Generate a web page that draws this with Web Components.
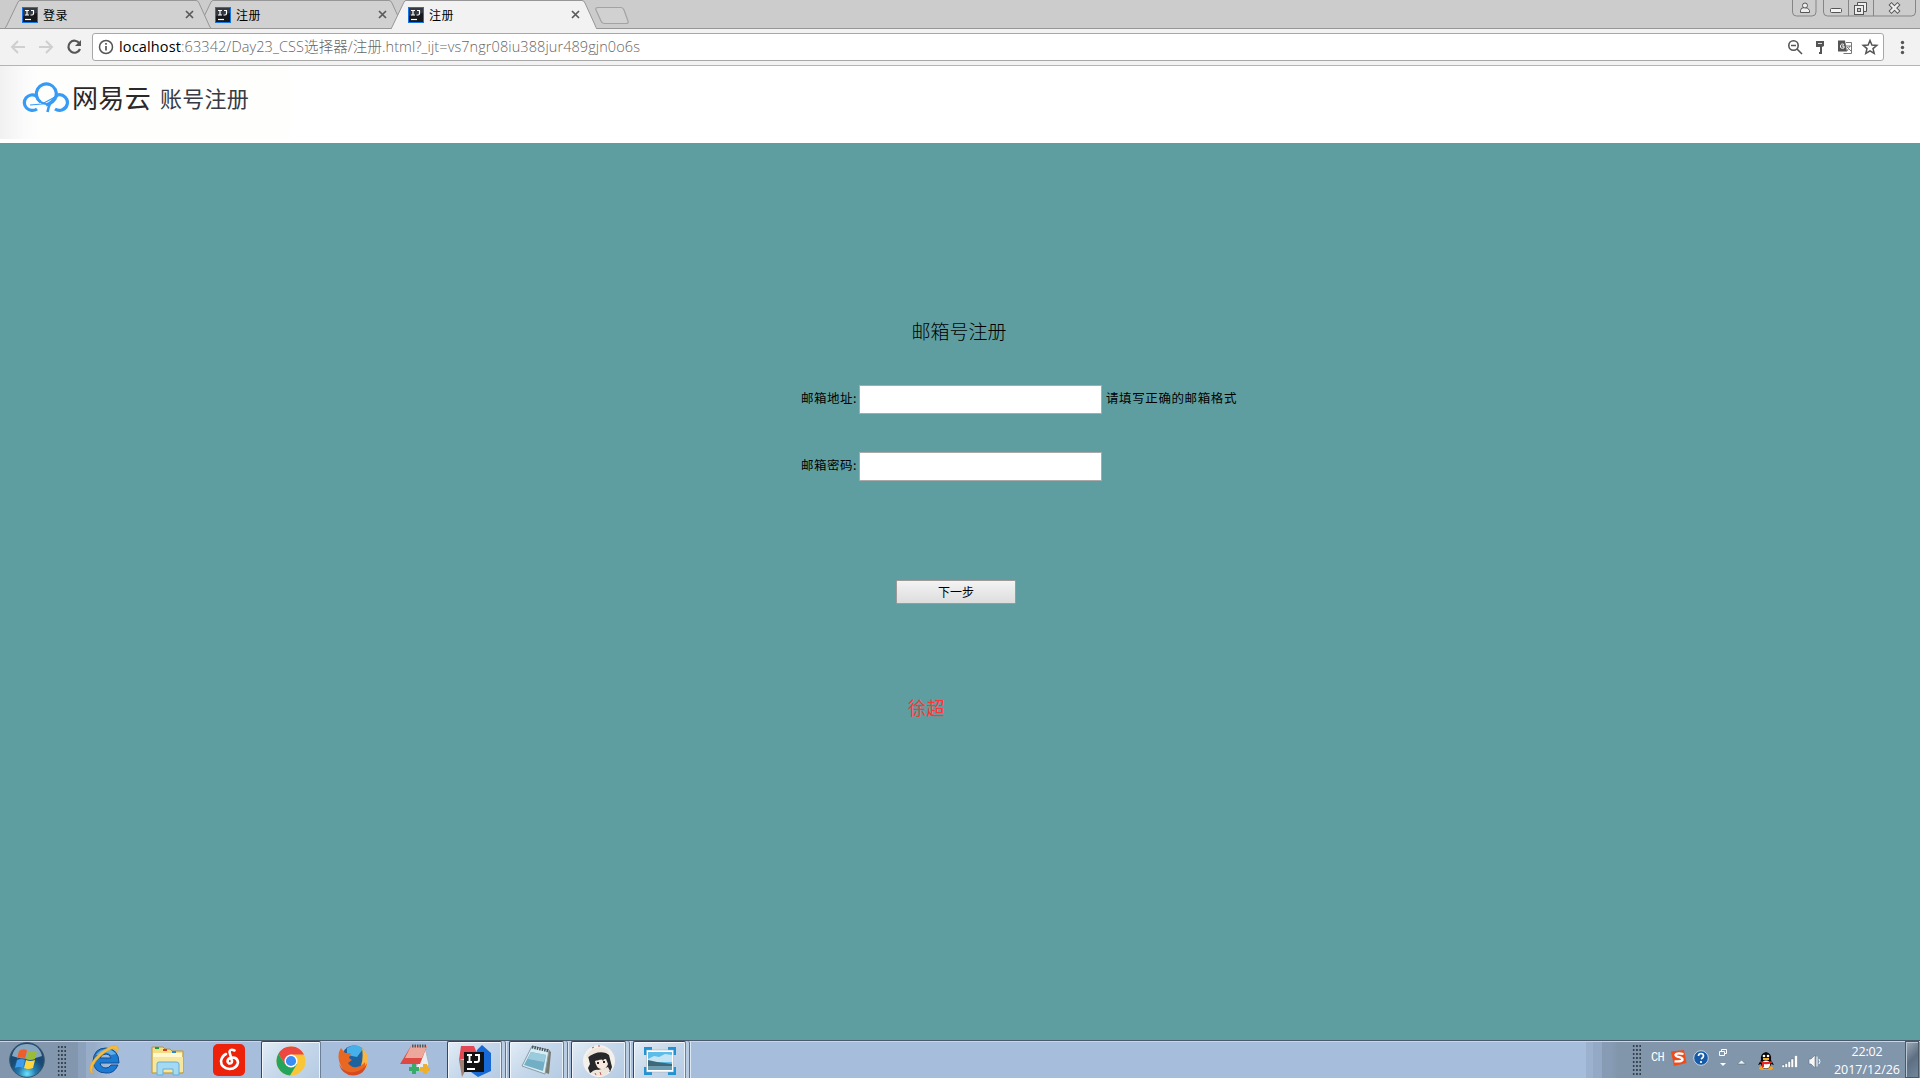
<!DOCTYPE html>
<html lang="zh-CN">
<head>
<meta charset="utf-8">
<title>注册</title>
<style>
html,body{margin:0;height:100%;overflow:hidden}
body{font-family:"Open Sans","Noto Sans CJK SC",sans-serif;color:#000}
</style>
</head>
<body>
<desktop-screen></desktop-screen>
<script>
const define=(name,css,html,after)=>customElements.define(name,class extends HTMLElement{
  connectedCallback(){
    if(this.shadowRoot)return;
    const r=this.attachShadow({mode:'open'});
    r.innerHTML='<style>*{box-sizing:border-box}:host{display:block;box-sizing:border-box}svg{display:block;flex:none}'+css+'</style>'+(typeof html==='function'?html(this):html);
    if(after)after(this,r);
  }
});

/* One line of text whose letter spacing is adjusted to fill a given width. */
define('fit-text',`:host{display:block;white-space:nowrap;flex:none}span{display:inline-block}`,
  el=>`<span>${el.getAttribute('text')}</span>`,
  (el,r)=>{
    const s=r.querySelector('span'),w=+el.getAttribute('w'),t=el.getAttribute('text');
    const fit=()=>{const n=s.getBoundingClientRect().width;if(n)s.style.letterSpacing=((w-n)/[...t].length)+'px'};
    fit();el.style.width=w+'px';
  });

const IJ=`<svg width="16" height="16" viewBox="0 0 16 16"><rect width="16" height="16" fill="#1673e6"/><rect x="1" y="1" width="14" height="14" fill="#17191d"/><path d="M1 1h14v5L1 9z" fill="#343840"/><path d="M3 3.500h4M5 3.500v4.500M3 8h4M9 3.500h3M11.500 3.500v3q0 1.500-1.500 1.500H8.500" stroke="#fff" stroke-width="1.200" fill="none"/><path d="M3 12.500h6" stroke="#fff" stroke-width="1.200"/></svg>`;

define('browser-tab',`:host{position:relative;width:206px;height:29px;flex:none;margin-right:-13px;z-index:2}
:host([mid]){z-index:1}:host([active]){z-index:3}
.shape{position:absolute;inset:0}.row{position:relative;display:flex;align-items:center;height:29px;padding:0 17px 0 17px;font-size:12px}
fit-text{margin-left:5px}`,
el=>{const a=el.hasAttribute('active');return `<svg class="shape" width="206" height="29"><path d="M0 ${a?29:28}L1.500 26L13 2Q14 .5 15 .5H191Q193 .5 194 3L204 25Q205 28 206 ${a?29:28}" fill="${a?'#f2f2f2':'#d1d1d1'}" stroke="#969696"/></svg>
<div class="row">${IJ}<fit-text text="${el.getAttribute('name')}" w="25"></fit-text><span style="flex:1"></span><svg width="9" height="9" viewBox="0 0 9 9"><path d="M1 1l7 7M8 1l-7 7" stroke="#5a5a5a" stroke-width="1.700"/></svg></div>`});

define('tab-strip',`:host{height:29px;display:flex;padding-left:5px;position:relative;background:linear-gradient(#ccc,#ccc 28px,#969696 28px)}
.new{margin:6px 0 0 10px}.user{margin-left:auto}`,
`<browser-tab name="登录"></browser-tab><browser-tab name="注册" mid></browser-tab><browser-tab name="注册" active></browser-tab>
<svg class="new" width="36" height="20"><path d="M4 1.500H27Q29 1.500 30 4L34 15Q35 17.500 32 17.500H10Q8 17.500 7 15L2 4Q1 1.500 4 1.500Z" fill="#d1d1d1" stroke="#a3a3a3" stroke-width="1.200"/></svg>
<svg class="user" width="128" height="19" viewBox="0 0 128 19" fill="none"><path d="M.5 0v12q0 4 4 4H20q4 0 4-4V0M31.500 0v12q0 4 4 4h84q4 0 4-4V0M56.500 0v16M81.500 0v16" stroke="#858585"/><path d="M8.500 12.500v-2q0-3 4-3t5 3v2z" fill="#eee" stroke="#555"/><circle cx="13" cy="5.500" r="2.500" fill="#eee" stroke="#555"/><rect x="38.500" y="8.500" width="11" height="4" rx="1" fill="#f4f4f4" stroke="#555"/><path d="M65.500 2.500h9v9h-9z" fill="#eee" stroke="#555"/><rect x="62.500" y="5.500" width="9" height="9" fill="#eee" stroke="#555"/><rect x="65.500" y="8.500" width="3" height="3" fill="#ccc" stroke="#555"/><path d="M99.500 5l6 6M105.500 5l-6 6" stroke="#555" stroke-width="4.200" stroke-linecap="square"/><path d="M99.500 5l6 6M105.500 5l-6 6" stroke="#eee" stroke-width="2.400" stroke-linecap="square"/></svg>`);

define('address-bar',`:host{height:37px;background:#f2f2f2;border-bottom:1px solid #b4b4b4;display:flex;padding:4px 0 0 9px}
.nav{margin-right:9px}.box{width:1792px;height:28px;border:1px solid #a7a7a7;border-radius:3px;background:#fff;display:flex;align-items:center;padding-left:5px;font-size:14.500px;line-height:26px}
.path{color:#666;font-weight:300}.info{margin-right:5px}.icons{margin-left:auto}`,
`<svg class="nav" width="74" height="28" viewBox="0 0 74 28" fill="none" stroke="#cfcfcf" stroke-width="2"><path d="M16 14H3M9 8l-6 6 6 6M30 14h13M37 8l6 6-6 6"/><path d="M70.500 10.500A6 6 0 1 0 71 16" stroke="#555" stroke-width="2.200"/><path d="M72 7v6h-6z" fill="#555" stroke="none"/></svg>
<div class="box"><svg class="info" width="16" height="16" viewBox="0 0 16 16"><circle cx="8" cy="8" r="6.500" fill="none" stroke="#555" stroke-width="1.500"/><path d="M8 7v4.500M8 4v1.700" stroke="#555" stroke-width="1.700"/></svg>
<fit-text text="localhost" w="62"></fit-text><fit-text class="path" text=":63342/Day23_CSS选择器/注册.html?_ijt=vs7ngr08iu388jur489gjn0o6s" w="459"></fit-text>
<svg class="icons" width="95" height="26" viewBox="0 0 95 26" fill="none" stroke="#555"><circle cx="5.500" cy="11.500" r="4.700" stroke-width="1.600"/><path d="M9 15l5 5M3 11.500h5" stroke-width="1.600"/><path d="M28 7h8v5l-2 1v7h-3v-2h1v-5h-4z" fill="#555" stroke="none"/><path d="M30 9.500h4" stroke="#ddd"/><path d="M50 6.500h7l2 11h-9z" fill="#555" stroke="none"/><path d="M58 8.500h5.500v11h-8" stroke="#777"/><path d="M56 10.500q-3-1.500-3.500 1.500t3.500 2v-2h-2" stroke="#fff"/><path d="M58 12h5M59 17l3-5M59 13l4 4" stroke="#777"/><path d="M82 6.500l1.900 4.600 4.900.3-3.800 3.200 1.200 4.800-4.200-2.600-4.200 2.600 1.200-4.800-3.800-3.200 4.900-.3z" stroke-width="1.500"/></svg></div>
<svg style="margin-left:14px" width="10" height="28" fill="#555"><circle cx="4.500" cy="9.500" r="1.700"/><circle cx="4.500" cy="14.500" r="1.700"/><circle cx="4.500" cy="19.500" r="1.700"/></svg>`);

define('site-header',`:host{height:77px;background:#fff}
.in{width:290px;height:73px;background:linear-gradient(90deg,#f1f1f1,#fbfbfb 25px,#fefefd 40px);display:flex;padding-left:22px;padding-top:13px;font-family:"Noto Sans CJK SC",sans-serif;color:#2b2829}
.a{font-size:26px;line-height:36px;margin-left:3px}.b{font-size:22px;line-height:36px;margin-left:9px;color:#383a44}`,
`<div class="in"><svg width="47" height="38" viewBox="0 0 47 38" fill="none" stroke="#369bf5" stroke-width="3.200"><path d="M18.500 23A10 10 0 1 1 34 17.500Q32.500 23 24 26"/><path d="M14.500 17A8 7.800 0 1 0 15 30"/><path d="M36 15.800A8 7.800 0 1 1 33 30"/><path d="M36 16Q27 22 25.500 33" stroke-width="2.600"/><path d="M14 17Q17 24 24 25" stroke-width="2"/><path d="M8 26L20 25L33 18" stroke-width="1.200"/></svg><fit-text class="a" text="网易云" w="79"></fit-text><fit-text class="b" text="账号注册" w="89"></fit-text></div>`);

define('form-row',`:host{display:flex;align-items:center;height:29px;font-size:12.500px;width:460px;margin-left:801px}
input{width:243px;height:29px;margin:0 4px 0 2px;border:1px solid #a9a9a9;padding:1px;border-radius:0;outline:0;background:#fff}
.l,::slotted(*){margin-bottom:4px}`,
el=>`<fit-text class="l" text="${el.getAttribute('label')}" w="56"></fit-text><input type="${el.getAttribute('type')}" aria-label="${el.getAttribute('label')}"><slot></slot>`);

define('register-page',`:host{flex:1;background:#5f9ea0;display:flex;flex-direction:column;font-family:"Noto Sans CJK SC",sans-serif;color:#000}
.title{font-size:19px;line-height:28px;margin:174px 0 0 911.500px;font-weight:300}
.second{margin-top:38px}
button{width:120px;height:24px;margin:99px 0 0 896px;padding:0 0 1px;border:1px solid #9e9a9a;border-radius:1px;background:linear-gradient(#f4f4f4,#ececec 30%,#e7e6e6 60%,#ddd);font:12px "Noto Sans CJK SC",sans-serif;color:#000;display:flex;justify-content:center;align-items:center}
.name{color:#ff3636;font-size:18px;line-height:26px;margin:90px 0 0 908px;font-weight:400}`,
`<fit-text class="title" text="邮箱号注册" w="95"></fit-text>
<form-row label="邮箱地址:" type="text" style="margin-top:40px"><fit-text text="请填写正确的邮箱格式" w="131"></fit-text></form-row>
<form-row label="邮箱密码:" type="password" class="second"></form-row>
<button>下一步</button><fit-text class="name" text="徐超" w="37"></fit-text>`);

define('task-cell',`:host{height:37px;flex:none;display:flex;justify-content:center;align-items:center;padding-top:1px;margin-right:1px}
:host([framed]){border:1px solid #394656;border-bottom:0;border-right-color:#6d7f95;border-radius:2px 2px 0 0;background:linear-gradient(135deg,#e2edf6,#c5d7ea 50%,#b6cbe3);box-shadow:inset 1px 1px #f1f7fc,inset -1px 0 #e8f0f8}
:host([stack]){box-shadow:inset 1px 1px #f1f7fc,inset -1px 0 #e8f0f8,3px 0 #b7cce3,4px 0 #60738b,5px 0 #dce8f4}`,
`<slot></slot>`,el=>{el.style.width=el.getAttribute('w')+'px'});
define('task-grip',`:host{width:10px;height:32px;flex:none;background-image:radial-gradient(circle,#35404d 1px,transparent 1.200px);background-size:3.300px 4px}`,``);

define('task-bar',`:host{height:38px;border-top:1px solid #4a5a6c;display:flex;background:linear-gradient(90deg,#8297ae 0 78px,#8ca1bb 78px 86px,#97adc8 86px 94px,#a6bedb 110px 1586px,#9bb1cd 1586px 1593px,#94a9c5 1593px 1602px,#879cb4 1602px 1611px,#8195ab 1618px);box-shadow:inset 0 1px #c8d7e6;color:#fff}
.tray{margin-left:auto;display:flex;align-items:center;width:288px}
.ch{font:12px "Liberation Mono",monospace;margin:0 7px 4px 9px}.clock{width:74px;margin-left:8px;text-align:center;font-size:12.500px;line-height:18px;padding-top:2px;display:flex;flex-direction:column;align-items:center}
.desk{width:14px;height:37px;margin-left:auto;margin-right:1px;border:1px solid #4b5967;background:linear-gradient(135deg,#9eabb9,#5d6f82 50%,#71869e);box-shadow:inset 1px 1px #bbc7d2}`,
`<task-cell w="54"><svg width="38" height="36" viewBox="0 0 38 36"><defs><radialGradient id="o" cy=".9"><stop stop-color="#6ce3ff"/><stop offset=".5" stop-color="#247baf"/><stop offset="1" stop-color="#194a73"/></radialGradient></defs><circle cx="19" cy="18" r="17.300" fill="url(#o)" stroke="#35546e"/><path d="M4 14Q7 2 19 2t15 12Q20 20 4 14" fill="#c4d9e8" opacity=".65"/><path d="M11 9q4-3 8-.5l-2 8q-4-2-8 0z" fill="#ef5d2b"/><path d="M20 9q4 2 9 0l-2 8q-5 2-9 0z" fill="#9bbc38"/><path d="M9 18q4-2 8 0l-2 8q-4-2-8 0z" fill="#3f9bec"/><path d="M18 18q4 2 9 0l-2 8q-5 2-9 0z" fill="#ffd43c"/></svg></task-cell>
<task-grip style="margin:4px 0 0 2px"></task-grip>
<task-cell w="61" style="margin-left:7px"><svg width="34" height="34" viewBox="1 0 34 34"><path d="M32 20H13q1 5 6 5 3 0 5-3h7q-4 9-12 8Q7 30 6 18 7 5 19 5q13 1 13 15zM13 15h11q-1-4-5-4-5 0-6 4" fill="#1b7bd2" stroke="#124c93"/><path d="M9 12q4-6 11-6 6 1 9 5l-5 1q-5-5-10 0z" fill="#7ec5f0" opacity=".7"/><path d="M4 30Q-1 23 13 10 27-1 31 4q1 2-1 6 0-5-5-4Q18 8 9 18 3 27 6 30z" fill="#f5bb3b" stroke="#dca334" stroke-width=".5"/></svg></task-cell>
<task-cell w="61"><svg width="34" height="32" viewBox="0 0 34 32"><path d="M2 29V3h11l2 2h5l2 2h11v22z" fill="#f3dd85" stroke="#b4964b"/><path d="M3 9h29v4H3z" fill="#fff8cf"/><path d="M5 3h4v2H5z" fill="#1b9d46"/><path d="M13 5h4v2h-4z" fill="#d43b25"/><path d="M22 7h4v2h-4z" fill="#258ad0"/><path d="M3 13h30v15H3z" fill="#f5e6a0"/><path d="M7 31V20q0-2 2-2h17q3 0 3 2v11h-6v-6H13v6z" fill="#a4d9f3" stroke="#67acd4"/></svg></task-cell>
<task-cell w="61"><svg width="32" height="32" viewBox="0 0 32 32"><rect width="32" height="32" rx="5" fill="#ed220b"/><path d="M21.500 6.500q-4.500-2-5 1.500l2.500 9q0 3-3 2.500-3-2 0-5 8-3 9 4-1 6-8.500 6.500-8.500-1-8.500-8 1-5 5-7" fill="none" stroke="#fff" stroke-width="2.600" stroke-linecap="round"/></svg></task-cell>
<task-cell w="60" framed style="margin-left:1px"><svg width="30" height="30" viewBox="0 0 30 30"><circle cx="15" cy="15" r="14.500" fill="#fac537"/><path d="M2.400 7.800A14.500 14.500 0 0 1 28 8.500H15L9 18z" fill="#ed4742"/><path d="M2.400 7.800A14.500 14.500 0 0 0 14 29.500L21 18 15 21 9 18z" fill="#25a45b"/><circle cx="15" cy="15" r="6.500" fill="#fff"/><circle cx="15" cy="15" r="5.100" fill="#398df5"/></svg></task-cell>
<task-cell w="61"><svg width="32" height="32" viewBox="0 0 32 32"><circle cx="17" cy="14" r="12.500" fill="#1f62a0"/><path d="M10 4q9-6 16 1l-6 8-10-2z" fill="#45b0ea"/><path d="M25 4q8 7 5.500 17-3 8-11 8 8-8 5.500-25" fill="#fab640"/><path d="M2 8l2-4 4 5 6 0-2 5 3 2-4 3q3 5 9 4 5-1 8-5 1 9-6 12-10 3-16-5-6-8-4-17" fill="#e96721"/><path d="M2 20q6 10 15 8 9-1 13-9-2 12-14 12.500Q5 31 2 20" fill="#d74a20"/></svg></task-cell>
<task-cell w="61" style="margin-left:1px"><svg width="34" height="32" viewBox="0 0 34 32"><path d="M26 3l4 18-8 5-5-3z" fill="#e8edf1" stroke="#abb7c0"/><path d="M12 2h16l-7 18H1z" fill="#dd4a44"/><path d="M12 2h16l-5 12H6z" fill="#eca99b"/><path d="M13 2h15" stroke="#51575e" stroke-width="3" stroke-dasharray="1.500 1"/><path d="M15 20v10M10 25h10" stroke="#36ac68" stroke-width="4"/><path d="M26 20v10M21 25h10" stroke="#eeae2e" stroke-width="4"/></svg></task-cell>
<task-cell w="55" framed stack><svg width="34" height="34" viewBox="0 0 34 34"><path d="M3 2h13l4 10L1 16z" fill="#e34754"/><path d="M1 16h12L4 33z" fill="#a28175"/><path d="M19 6l5-5 9 8v18l-13 6-7-5z" fill="#1769d3"/><rect x="6" y="8" width="20" height="20" fill="#111"/><path d="M9 11h5M11.500 11v7M9 18h5M17 11h4v5q0 2-2 2h-3" stroke="#fff" stroke-width="1.900" fill="none"/><path d="M9 25h8" stroke="#fff" stroke-width="2"/></svg></task-cell>
<task-cell w="55" framed stack style="margin-left:6px"><svg width="34" height="33" viewBox="0 0 34 33"><path d="M28 5l3 3-2 22-8-3z" fill="#797b6c"/><path d="M12 2l17 4-4 24L2 22z" fill="#d6edf4" stroke="#899ba3"/><path d="M11 8l15 3-3 16L4 21z" fill="#72aec5"/><path d="M11 8l15 3-2 7L8 15z" fill="#9bcbdc"/><path d="M12 3l17 4" stroke="#475159" stroke-width="3" stroke-dasharray="1.500 1"/></svg></task-cell>
<task-cell w="55" framed stack style="margin-left:6px"><svg width="34" height="34" viewBox="0 0 34 34"><circle cx="17" cy="17" r="16" fill="#f4f1ed"/><path d="M6 12Q17 2 27 11l3 12-2 5-7-3-5 1-8 3-2-5 2-4z" fill="#282729"/><path d="M13 17l3-1 8-1 2 5q-2 6-7 5-5-1-6-8z" fill="#f7e9df"/><path d="M12 11l4 6 2-5 3 5 3-6z" fill="#282729"/><path d="M4 12Q13-1 26 6l1 4Q16 5 5 14z" fill="#eee6dc"/><path d="M15 19h2M21 18h2" stroke="#222" stroke-width="2"/><path d="M9 29q3-4 8-3l9-3 2 4-6 5h-8z" fill="#eee5db"/><path d="M13 29l1 2M18 28l1 3M10 4l2-1M16 2h2" stroke="#c85548"/></svg></task-cell>
<task-cell w="53" framed stack style="margin-left:6px"><svg width="32" height="28" viewBox="0 0 32 28"><path d="M1.500 8V1.500H8M24 1.500h6.500V8M1.500 20v6.500H8M24 26.500h6.500V20" fill="none" stroke="#2093d4" stroke-width="3"/><rect x="2.500" y="3" width="27" height="22" fill="#fff" stroke="#9ba9b2" stroke-width=".5"/><rect x="4" y="5" width="24" height="18" fill="#5dbde9"/><path d="M4 12l6-3 5 1 6-3 7 1v7H4z" fill="#c5e5f5"/><path d="M4 13l9 2 15 2v3H4z" fill="#3f697a"/><path d="M4 19h24v4H4z" fill="#6c9cb0"/></svg></task-cell>
<div class="tray"><task-grip></task-grip><fit-text class="ch" text="CH" w="13"></fit-text>
<svg width="16" height="16" viewBox="0 0 16 16" style="margin:0 6px 4px 0"><path d="M0 1.500l13-1.500 2.500 13L3 16z" fill="#ee4c1b"/><path d="M12.500 4q-7-1.500-8 .8 0 1.800 4 2.400 3.500 1 3 2.800-1.500 2-8 1.300" fill="none" stroke="#fff" stroke-width="2.300"/></svg>
<svg width="16" height="16" viewBox="0 0 16 16" style="margin:0 11px 4px 0"><circle cx="8" cy="8" r="7.300" fill="#175aa5" stroke="#c2d3e5"/><path d="M5.500 6q0-2.500 2.500-2.500T10.500 6Q10.500 7.500 8 9M8 11v2" fill="none" stroke="#fff" stroke-width="1.700"/></svg>
<svg width="10" height="20" viewBox="0 0 10 20" style="margin:0 8px 4px -2px" fill="none" stroke="#fff"><path d="M3.500 3V1.500h5v4H7M1.500 3.500h5v4h-5z"/><path d="M2 15h6l-3 3z" fill="#fff" stroke="none"/></svg>
<svg width="9" height="6" style="margin:4px 12px 0 1px"><path d="M.5 5l4-4 4 4z" fill="#eef2f5" stroke="#526477" stroke-width=".5"/></svg>
<svg width="16" height="18" viewBox="0 0 16 18" style="margin:2px 8px 0 0"><ellipse cx="5" cy="16" rx="4" ry="2" fill="#f6a11c"/><ellipse cx="11" cy="16" rx="4" ry="2" fill="#f6a11c"/><path d="M3 8q-1-7 5-8 6 1 5 8l3 5-3-1q-1 5-5 5t-5-5l-3 1z" fill="#080808"/><ellipse cx="8" cy="12.500" rx="4" ry="4" fill="#fff"/><circle cx="6" cy="4" r="1.300" fill="#fff"/><circle cx="10" cy="4" r="1.300" fill="#fff"/><path d="M5 7h6" stroke="#faad22" stroke-width="2"/><path d="M2 9q6 2 12 0v2q-5 2-8 1v3H4v-4L2 10z" fill="#e32820"/></svg>
<svg width="16" height="13" viewBox="0 0 16 13" style="margin:3px 10px 0 0" fill="#fff" stroke="#546577" stroke-width=".4"><path d="M0 10h2.600v2.500H0zM3 8.500h2.600v4H3zM6 6.500h2.600v6H6zM9 4h2.600v8.500H9zM12.500.5h3v12h-3z"/></svg>
<svg width="14" height="15" viewBox="0 0 14 15" style="margin:4px 0 0 0"><path d="M1 5h2l4-4v13l-4-4H1z" fill="#f7f7f7" stroke="#617386" stroke-width=".6"/><path d="M9 2.500v10M11 5q2 2.500 0 5" fill="none" stroke="#fff"/></svg>
<div class="clock"><fit-text text="22:02" w="31"></fit-text><fit-text text="2017/12/26" w="66"></fit-text></div><div class="desk"></div></div>`);

define('desktop-screen',`:host{width:1920px;height:1078px;display:flex;flex-direction:column;overflow:hidden}`,
`<tab-strip></tab-strip><address-bar></address-bar><site-header></site-header><register-page></register-page><task-bar></task-bar>`);
</script>
</body>
</html>
